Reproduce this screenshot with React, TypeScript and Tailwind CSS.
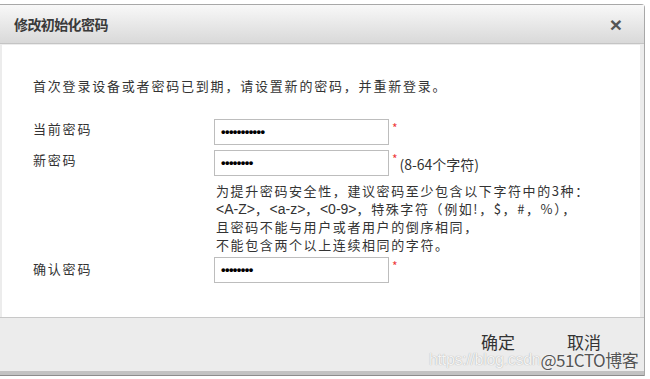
const cjk = { fontFamily: '"Noto Sans CJK SC", "Liberation Sans", sans-serif' };
const latin = { fontFamily: '"Liberation Sans", sans-serif' };

const Req = () => <span className="text-[#ee3b3b] text-[12px] leading-none self-start mt-[3px] ml-[3px]">*</span>;

const Pwd = ({ n }: { n: number }) => (
  <div className="w-[175px] h-[26px] border border-[#bdbdbd] bg-white flex items-center pl-[6px]">
    <span className="text-[13px] font-bold text-black tracking-[-0.6px]" style={latin}>
      {"•".repeat(n)}
    </span>
  </div>
);

export default function App() {
  return (
    <div className="w-[650px] h-[379px] bg-white pt-[4px] relative overflow-hidden text-[#333]" style={cjk}>
      <div className="w-[645px] bg-[#ececec] border-t border-r border-[#a8a8a8] rounded-tr-[4px]">
        {/* header */}
        <div className="h-[39px] border-b border-[#c4c4c4] bg-gradient-to-b from-[#f8f8f8] to-[#d9d9d9] flex items-center justify-between pl-[14px] pr-[22px]">
          <span className="text-[14px] font-semibold text-[#3a3a3a] tracking-[-0.6px]">修改初始化密码</span>
          <span className="text-[21px] font-bold text-[#555] leading-none" style={latin}>×</span>
        </div>

        {/* body */}
        <div className="ml-[2px] mr-[4px] mt-[1px] h-[272px] bg-white pl-[31px] pt-[31px] text-[13px] tracking-[1.8px]">
          <div className="leading-[20px]">首次登录设备或者密码已到期，请设置新的密码，并重新登录。</div>

          <div className="mt-[23px] flex items-start">
            <div className="w-[181px] leading-[20px]">当前密码</div>
            <Pwd n={11} />
            <Req />
          </div>

          <div className="mt-[5px] flex items-start">
            <div className="w-[181px] leading-[20px]">新密码</div>
            <Pwd n={8} />
            <Req />
            <span className="mt-[5px] tracking-normal text-[14px] leading-[18px]">(8-64个字符)</span>
          </div>

          <div className="ml-[183px] mt-[6px] leading-[17.5px] tracking-[1.6px]">
            <div>为提升密码安全性，建议密码至少包含以下字符中的3种：</div>
            <div>
              <span className="tracking-normal text-[14px]" style={latin}>&lt;A-Z&gt;</span>，
              <span className="tracking-normal text-[14px]" style={latin}>&lt;a-z&gt;</span>，
              <span className="tracking-normal text-[14px]" style={latin}>&lt;0-9&gt;</span>，特殊字符（例如!，$，#，%），
            </div>
            <div>且密码不能与用户或者用户的倒序相同，</div>
            <div>不能包含两个以上连续相同的字符。</div>
          </div>

          <div className="mt-[4px] flex items-start">
            <div className="w-[181px] leading-[20px] mt-[2px]">确认密码</div>
            <Pwd n={8} />
            <Req />
          </div>
        </div>

        {/* footer */}
        <div className="h-[54px] pb-[5px] border-t border-[#c8c8c8] flex items-center justify-end pr-[43px] gap-[52px] text-[17px] text-[#333]">
          <span>确定</span>
          <span>取消</span>
        </div>
        <div className="h-[5px] bg-[#c2c2c2] border-b border-[#8c8c8c]" />
      </div>

      {/* watermark */}
      <div className="absolute left-[429px] top-[350px] leading-[20px] whitespace-nowrap flex items-center">
        <span className="text-[16px] text-[#f4f4f4] tracking-[-0.3px]" style={{ ...latin, textShadow: "0 0 1px #9a9a9a" }}>https://blog.csdn</span>
        <span className="text-[17px] text-[#555] tracking-[-0.5px]" style={{ textShadow: "0 0 2px #fff" }}>@51CTO博客</span>
      </div>
    </div>
  );
}
